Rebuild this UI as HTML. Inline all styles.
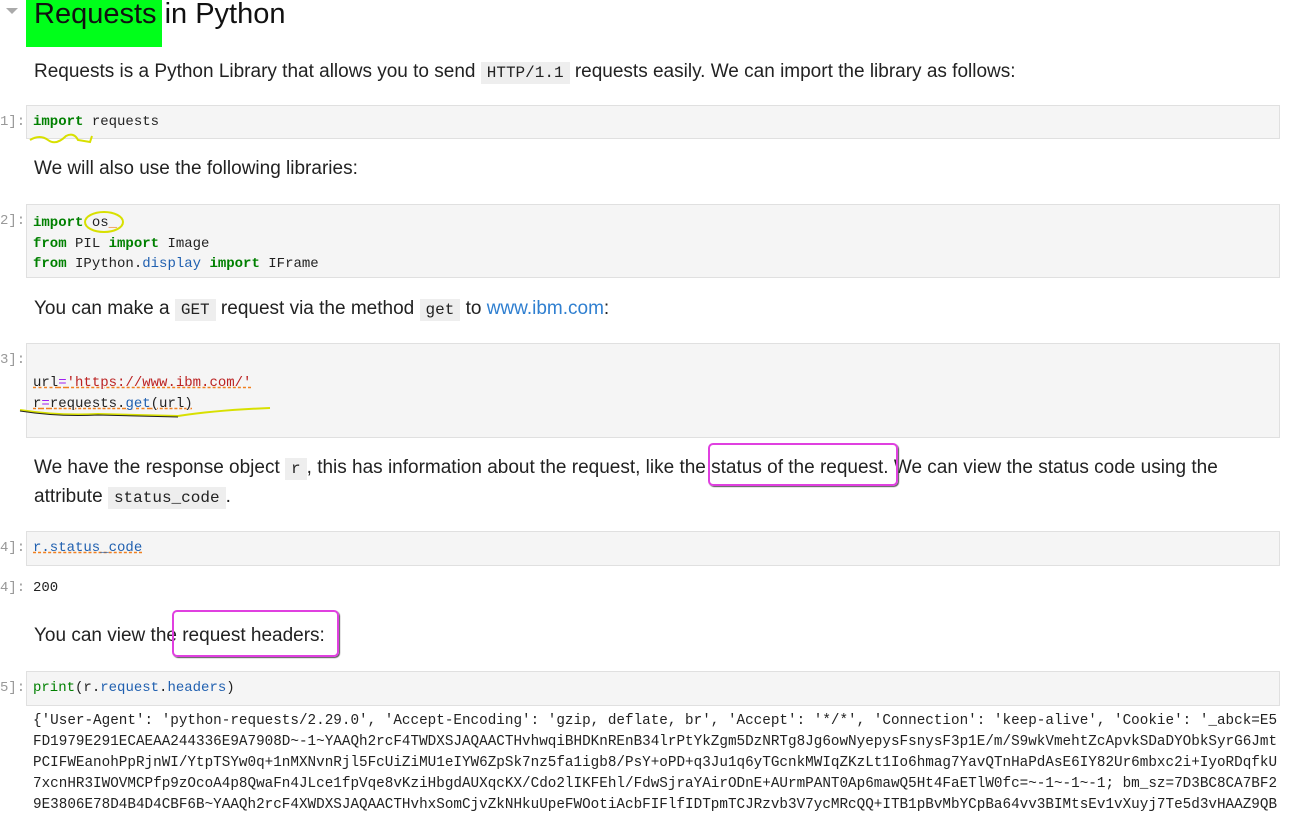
<!DOCTYPE html>
<html><head><meta charset="utf-8"><style>
body{margin:0;width:1292px;height:803px;overflow:hidden;background:#fff;position:relative;font-family:"Liberation Sans",sans-serif;color:#222}
.a{position:absolute;white-space:pre}
.t{font-size:19px;color:#222;line-height:24px}
.m{font-family:"Liberation Mono",monospace;font-size:14px;color:#222}
.cell{position:absolute;left:26px;width:1252px;background:#f5f5f5;border:1px solid #e0e0e0}
.p{position:absolute;left:0;font-family:"Liberation Mono",monospace;font-size:14px;color:#999}
.k{color:#008000;font-weight:bold}
.ic{font-family:"Liberation Mono",monospace;font-size:16px;background:#eee;padding:2px 6px}
.u{text-decoration:underline dashed #f08020}
.box{position:absolute;border:2px solid #e040e0;border-radius:5px;box-shadow:1px 1px 1px #555}
.o{font-family:"Liberation Mono",monospace;font-size:14.3px;color:#222;line-height:21px}
</style></head><body>
<div class="a" style="left:26px;top:0;width:136px;height:47px;background:#00ff1a"></div>
<div class="a" style="left:6px;top:8px;width:0;height:0;border-left:6px solid transparent;border-right:6px solid transparent;border-top:6px solid #aaa"></div>
<div class="a" style="left:34px;top:-2px;font-size:29px;color:#111">Requests in Python</div>
<div class="a t" style="left:34px;top:60px">Requests is a Python Library that allows you to send <span class="ic">HTTP/1.1</span> requests easily. We can import the library as follows:</div>

<div class="cell" style="top:105px;height:32px"></div>
<div class="p" style="top:114px">1]:</div>
<div class="a m" style="left:33px;top:114px"><span class="k">import</span> requests</div>
<svg class="a" style="left:28px;top:128px" width="70" height="20"><path d="M2 12 Q12 6 20 12 T38 8 Q46 4 50 12 L62 14 L64 8" stroke="#d8e000" stroke-width="2" fill="none"/></svg>
<div class="a t" style="left:34px;top:157px">We will also use the following libraries:</div>

<div class="cell" style="top:204px;height:72px"></div>
<div class="p" style="top:213px">2]:</div>
<div class="a m" style="left:33px;top:213px;line-height:20.5px"><span class="k">import</span> os<span style="color:#f08020">_</span>
<span class="k">from</span> PIL <span class="k">import</span> Image
<span class="k">from</span> IPython.<span style="color:#2060b0">display</span> <span class="k">import</span> IFrame</div>
<svg class="a" style="left:82px;top:208px" width="50" height="30"><ellipse cx="22" cy="14" rx="19" ry="10" stroke="#d8e000" stroke-width="2" fill="none"/></svg>
<div class="a t" style="left:34px;top:297px">You can make a <span class="ic">GET</span> request via the method <span class="ic">get</span> to <span style="color:#2f7fd0">www.ibm.com</span>:</div>

<div class="cell" style="top:343px;height:93px"></div>
<div class="p" style="top:352px">3]:</div>
<div class="a m" style="left:33px;top:373px;line-height:21px"><span class="u">url<span style="color:#a020f0">=</span><span style="color:#b22">'https://www.ibm.com/'</span></span>
<span class="u">r<span style="color:#a020f0">=</span>requests.<span style="color:#2060b0">get</span>(url)</span></div>
<svg class="a" style="left:18px;top:404px" width="260" height="20"><path d="M2 6 Q40 12 80 10 L160 12 Q200 6 252 4" stroke="#d8e000" stroke-width="2" fill="none"/><path d="M2 7 Q40 13 80 11 L160 13" stroke="#222" stroke-width="1" fill="none"/></svg>
<div class="a t" style="left:34px;top:456px">We have the response object <span class="ic">r</span>, this has information about the request, like the status of the request. We can view the status code using the</div>
<div class="a t" style="left:34px;top:485px">attribute <span class="ic">status_code</span>.</div>
<div class="box" style="left:708px;top:443px;width:186px;height:39px"></div>

<div class="cell" style="top:531px;height:33px"></div>
<div class="p" style="top:540px">4]:</div>
<div class="a m" style="left:33px;top:540px"><span class="u" style="color:#2060b0">r.status_code</span></div>
<div class="p" style="top:580px">4]:</div>
<div class="a m" style="left:33px;top:580px">200</div>
<div class="a t" style="left:34px;top:624px">You can view the request headers:</div>
<div class="box" style="left:172px;top:610px;width:163px;height:43px"></div>

<div class="cell" style="top:671px;height:33px"></div>
<div class="p" style="top:680px">5]:</div>
<div class="a m" style="left:33px;top:680px"><span style="color:#008000">print</span>(r.<span style="color:#2060b0">request</span>.<span style="color:#2060b0">headers</span>)</div>
<div class="a o" style="left:33px;top:711px">{'User-Agent': 'python-requests/2.29.0', 'Accept-Encoding': 'gzip, deflate, br', 'Accept': '*/*', 'Connection': 'keep-alive', 'Cookie': '_abck=E5
FD1979E291ECAEAA244336E9A7908D~-1~YAAQh2rcF4TWDXSJAQAACTHvhwqiBHDKnREnB34lrPtYkZgm5DzNRTg8Jg6owNyepysFsnysF3p1E/m/S9wkVmehtZcApvkSDaDYObkSyrG6Jmt
PCIFWEanohPpRjnWI/YtpTSYw0q+1nMXNvnRjl5FcUiZiMU1eIYW6ZpSk7nz5fa1igb8/PsY+oPD+q3Ju1q6yTGcnkMWIqZKzLt1Io6hmag7YavQTnHaPdAsE6IY82Ur6mbxc2i+IyoRDqfkU
7xcnHR3IWOVMCPfp9zOcoA4p8QwaFn4JLce1fpVqe8vKziHbgdAUXqcKX/Cdo2lIKFEhl/FdwSjraYAirODnE+AUrmPANT0Ap6mawQ5Ht4FaETlW0fc=~-1~-1~-1; bm_sz=7D3BC8CA7BF2
9E3806E78D4B4D4CBF6B~YAAQh2rcF4XWDXSJAQAACTHvhxSomCjvZkNHkuUpeFWOotiAcbFIFlfIDTpmTCJRzvb3V7ycMRcQQ+ITB1pBvMbYCpBa64vv3BIMtsEv1vXuyj7Te5d3vHAAZ9QB</div>
</body></html>
